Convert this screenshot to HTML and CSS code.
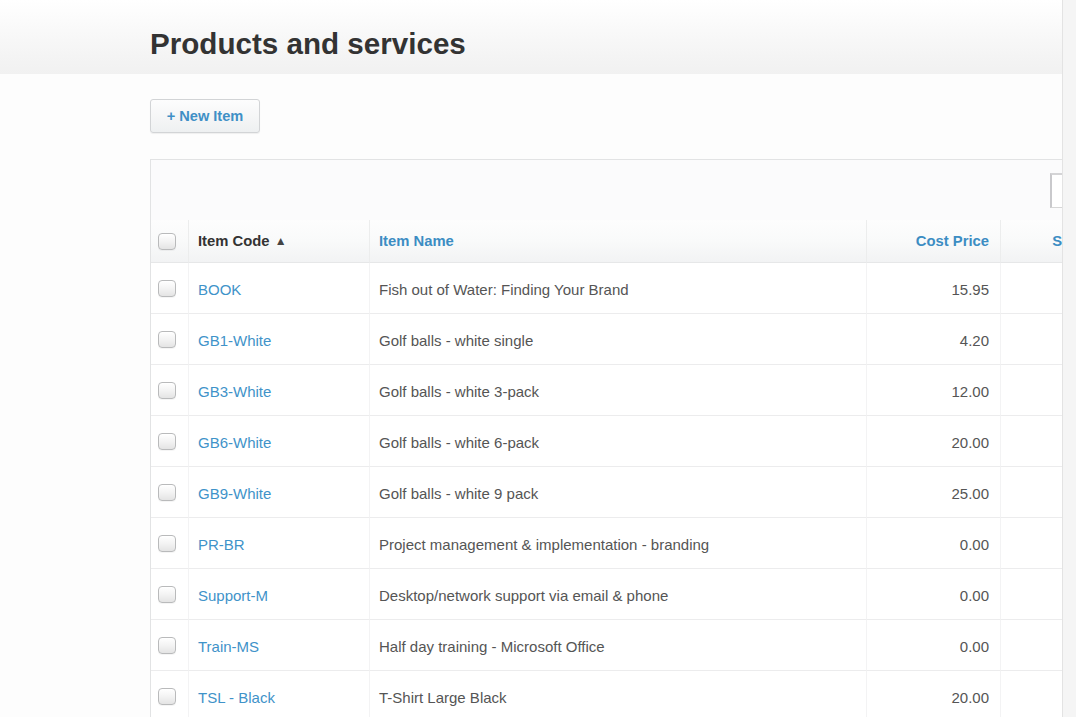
FILE: index.html
```html
<!DOCTYPE html>
<html lang="en">
<head>
<meta charset="utf-8">
<title>Products and services</title>
<link rel="stylesheet" href="styles.css">
</head>
<body>
<div class="page">
  <div class="main">
    <header class="page-header">
      <h1>Products and services</h1>
    </header>
    <div class="content">
      <button class="btn-new" type="button">+ New Item</button>
      <div class="panel">
        <div class="toolbar">
          <input class="search" type="text" aria-label="Search">
        </div>
        <table class="items">
          <colgroup>
            <col class="c-check">
            <col class="c-code">
            <col class="c-name">
            <col class="c-price">
            <col class="c-price">
            <col>
          </colgroup>
          <thead>
            <tr>
              <th class="cb"><span class="box"></span></th>
              <th class="sorted">Item Code <span class="arrow">▲</span></th>
              <th>Item Name</th>
              <th class="num">Cost Price</th>
              <th class="num">Sale Price</th>
              <th></th>
            </tr>
          </thead>
          <tbody>
            <tr><td class="cb"><span class="box"></span></td><td><a href="#">BOOK</a></td><td>Fish out of Water: Finding Your Brand</td><td class="num">15.95</td><td class="num"></td><td></td></tr>
            <tr><td class="cb"><span class="box"></span></td><td><a href="#">GB1-White</a></td><td>Golf balls - white single</td><td class="num">4.20</td><td class="num"></td><td></td></tr>
            <tr><td class="cb"><span class="box"></span></td><td><a href="#">GB3-White</a></td><td>Golf balls - white 3-pack</td><td class="num">12.00</td><td class="num"></td><td></td></tr>
            <tr><td class="cb"><span class="box"></span></td><td><a href="#">GB6-White</a></td><td>Golf balls - white 6-pack</td><td class="num">20.00</td><td class="num"></td><td></td></tr>
            <tr><td class="cb"><span class="box"></span></td><td><a href="#">GB9-White</a></td><td>Golf balls - white 9 pack</td><td class="num">25.00</td><td class="num"></td><td></td></tr>
            <tr><td class="cb"><span class="box"></span></td><td><a href="#">PR-BR</a></td><td>Project management &amp; implementation - branding</td><td class="num">0.00</td><td class="num"></td><td></td></tr>
            <tr><td class="cb"><span class="box"></span></td><td><a href="#">Support-M</a></td><td>Desktop/network support via email &amp; phone</td><td class="num">0.00</td><td class="num"></td><td></td></tr>
            <tr><td class="cb"><span class="box"></span></td><td><a href="#">Train-MS</a></td><td>Half day training - Microsoft Office</td><td class="num">0.00</td><td class="num"></td><td></td></tr>
            <tr><td class="cb"><span class="box"></span></td><td><a href="#">TSL - Black</a></td><td>T-Shirt Large Black</td><td class="num">20.00</td><td class="num"></td><td></td></tr>
          </tbody>
        </table>
      </div>
    </div>
  </div>
  <div class="gutter"></div>
</div>
</body>
</html>
```
FILE: styles.css
```css
* { box-sizing: border-box; }

html, body {
  margin: 0;
  padding: 0;
  height: 100%;
}

body {
  font-family: "Liberation Sans", Arial, Helvetica, sans-serif;
  font-size: 15px;
  color: #555;
  background: #fdfdfd;
}

.page {
  display: flex;
  height: 100vh;
  overflow: hidden;
}

.main {
  flex: 1;
  min-width: 0;
  overflow: hidden;
}

.gutter {
  width: 14px;
  flex: none;
  background: #f5f5f5;
  border-left: 1px solid #e3e3e3;
}

.page-header {
  height: 74px;
  padding: 29px 0 0 150px;
  background: linear-gradient(to bottom, #ffffff 0%, #f7f7f7 55%, #f1f1f1 100%);
}

.page-header h1 {
  margin: 0;
  font-size: 29.6px;
  line-height: 30px;
  font-weight: bold;
  color: #333;
  white-space: nowrap;
}

.content {
  padding: 25px 0 0 150px;
}

.btn-new {
  display: block;
  width: 110px;
  height: 34px;
  margin: 0 0 26px 0;
  padding: 0;
  font-family: inherit;
  font-size: 14.6px;
  font-weight: bold;
  color: #3f90c6;
  background: linear-gradient(to bottom, #fdfdfd 0%, #eef0f1 100%);
  border: 1px solid #d2d4d6;
  border-radius: 3px;
  box-shadow: 0 1px 1px rgba(0, 0, 0, 0.06);
  cursor: pointer;
}

.panel {
  width: 1113px;
  border: 1px solid #e2e3e4;
  background: #fff;
}

.toolbar {
  height: 60px;
  padding: 13px 12px 0 0;
  display: flex;
  justify-content: flex-end;
  align-items: flex-start;
  background: #fbfbfc;
}

.search {
  width: 200px;
  height: 35px;
  border: 1px solid #d6d6d6;
  border-left: 2px solid #c9c9cc;
  border-top: 2px solid #d4d4d6;
  background: #fff;
  font-family: inherit;
  font-size: 14px;
}

.items {
  width: 100%;
  table-layout: fixed;
  border-collapse: separate;
  border-spacing: 0;
}

.c-check { width: 37px; }
.c-code { width: 181px; }
.c-name { width: 497px; }
.c-price { width: 134px; }

.items th,
.items td {
  padding: 0 10px 0 9px;
  text-align: left;
  vertical-align: middle;
  white-space: nowrap;
  overflow: hidden;
}

.items th + th,
.items td + td {
  border-left: 1px solid #f3f3f4;
}

.items thead th {
  height: 43px;
  font-weight: bold;
  font-size: 14.8px;
  color: #3c8dc3;
  background: linear-gradient(to bottom, #fdfdfd 0%, #f9fafa 50%, #f2f3f4 100%);
  border-bottom: 1px solid #e6e7e8;
}

.items thead th + th {
  border-left: 1px solid #eceded;
}

.items thead th.sorted {
  color: #333;
}

.arrow {
  font-size: 12px;
  color: #444;
  vertical-align: 1px;
  margin-left: 1px;
}

.items tbody td {
  height: 51px;
  padding-top: 2px;
  border-bottom: 1px solid #ececed;
  color: #555;
  background: #fff;
}

.items th.num,
.items td.num {
  text-align: right;
  padding-right: 11px;
}

.items th.cb,
.items td.cb {
  padding: 0 0 0 7px;
}

.items a {
  color: #3f93c9;
  text-decoration: none;
}

.box {
  display: block;
  width: 18px;
  height: 17px;
  border: 1px solid #b9babb;
  border-radius: 4px;
  background: linear-gradient(to bottom, #ffffff 0%, #f3f3f3 50%, #e4e4e4 100%);
  box-shadow: inset 0 1px 1px rgba(255, 255, 255, 0.9), 0 1px 0 rgba(0, 0, 0, 0.04);
}
```
